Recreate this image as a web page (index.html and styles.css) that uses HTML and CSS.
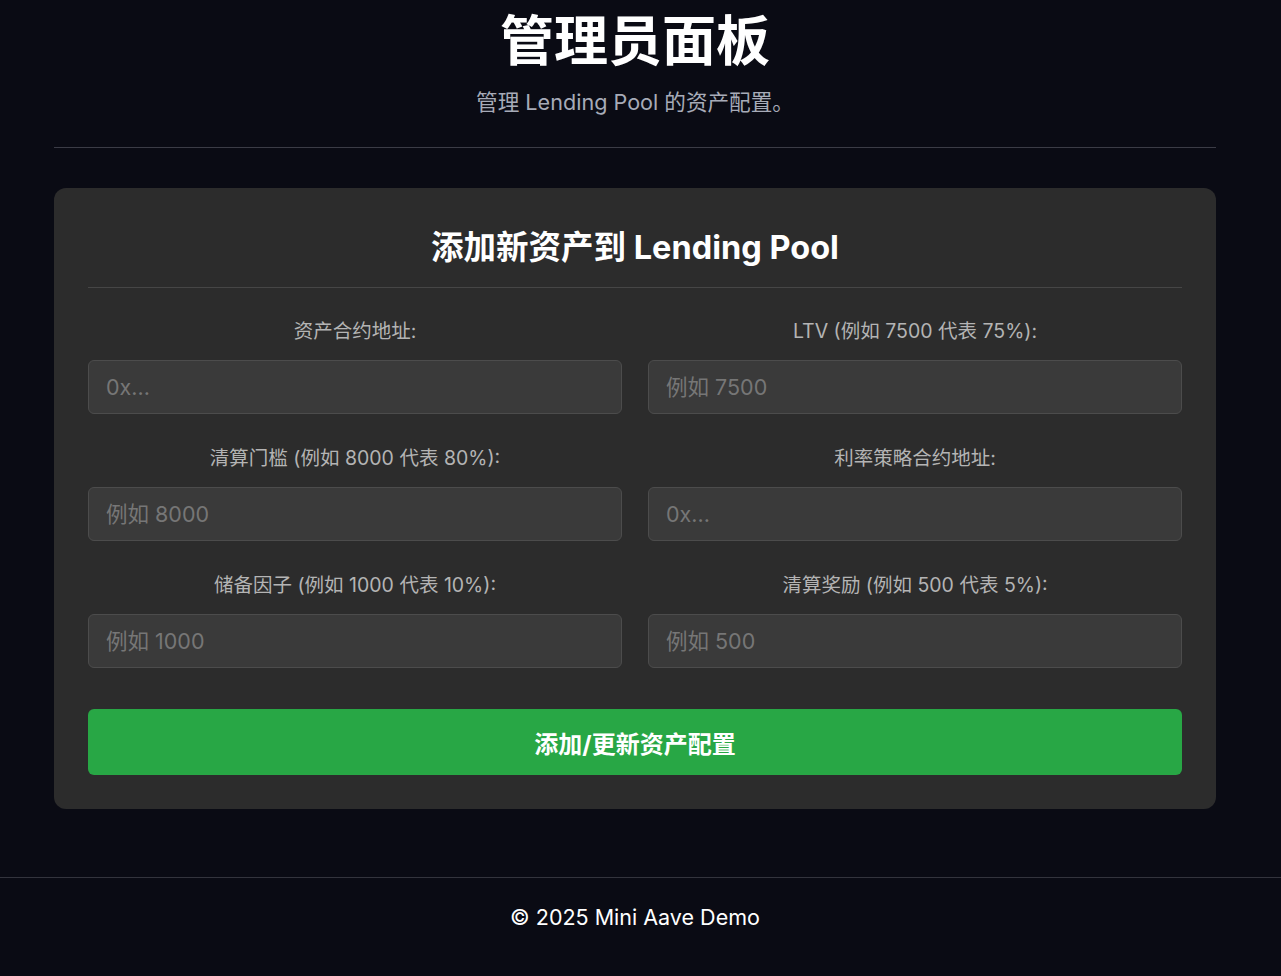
FILE: index.html
```html
<!DOCTYPE html>
<html lang="zh-CN">
<head>
<meta charset="utf-8">
<title>管理员面板</title>
<link rel="stylesheet" href="styles.css">
</head>
<body>
<main class="page">
  <header class="page-header">
    <h1 class="page-title">管理员面板</h1>
    <p class="page-subtitle">管理 Lending Pool 的资产配置。</p>
  </header>
  <section class="card">
    <h2 class="card-title">添加新资产到 Lending Pool</h2>
    <form class="form-grid">
      <div class="field">
        <label class="field-label">资产合约地址:</label>
        <input class="field-input" type="text" placeholder="0x...">
      </div>
      <div class="field">
        <label class="field-label">LTV (例如 7500 代表 75%):</label>
        <input class="field-input" type="text" placeholder="例如 7500">
      </div>
      <div class="field">
        <label class="field-label">清算门槛 (例如 8000 代表 80%):</label>
        <input class="field-input" type="text" placeholder="例如 8000">
      </div>
      <div class="field">
        <label class="field-label">利率策略合约地址:</label>
        <input class="field-input" type="text" placeholder="0x...">
      </div>
      <div class="field">
        <label class="field-label">储备因子 (例如 1000 代表 10%):</label>
        <input class="field-input" type="text" placeholder="例如 1000">
      </div>
      <div class="field">
        <label class="field-label">清算奖励 (例如 500 代表 5%):</label>
        <input class="field-input" type="text" placeholder="例如 500">
      </div>
      <button class="submit-btn" type="button">添加/更新资产配置</button>
    </form>
  </section>
</main>
<footer class="page-footer">© 2025 Mini Aave Demo</footer>
</body>
</html>
```
FILE: styles.css
```css
* { box-sizing: border-box; }
html, body { margin: 0; padding: 0; }
body {
  background: #0a0b14;
  color: #ffffff;
  font-family: Inter, "Noto Sans CJK SC", sans-serif;
  min-height: 976px;
}
.page {
  margin: 0 65px 0 54px;
}
.page-header {
  text-align: center;
  padding-top: 9px;
  padding-bottom: 30px;
  border-bottom: 1px solid #3b3c46;
}
.page-title {
  margin: 0;
  font-size: 54px;
  line-height: 66px;
  font-weight: 700;
}
.page-subtitle {
  margin: 12px 0 0;
  font-size: 21.6px;
  line-height: 30px;
  color: #a7abb8;
}
.card {
  margin-top: 40px;
  background: #2c2c2c;
  border-radius: 12px;
  padding: 34px;
}
.card-title {
  margin: 0 0 29px;
  padding-top: 4px;
  padding-bottom: 17px;
  border-bottom: 1px solid #464646;
  text-align: center;
  font-size: 32.5px;
  line-height: 44px;
  font-weight: 700;
}
.form-grid {
  display: grid;
  grid-template-columns: 1fr 1fr;
  column-gap: 26px;
  row-gap: 30px;
}
.field {
  display: flex;
  flex-direction: column;
  align-items: stretch;
}
.field-label {
  text-align: center;
  font-size: 19.5px;
  line-height: 28px;
  color: #b4b4b4;
  margin-bottom: 15px;
}
.field-input {
  height: 54px;
  background: #3a3a3a;
  border: 1px solid #4c4c4c;
  border-radius: 6px;
  padding: 0 17px;
  font-family: Inter, "Noto Sans CJK SC", sans-serif;
  font-size: 21.5px;
  color: #ffffff;
  outline: none;
}
.field-input::placeholder { color: #767676; }
.submit-btn {
  grid-column: 1 / -1;
  margin-top: 11px;
  height: 66px;
  border: none;
  border-radius: 6px;
  background: #28a745;
  color: #ffffff;
  font-family: Inter, "Noto Sans CJK SC", sans-serif;
  font-size: 24px;
  font-weight: 700;
}
.page-footer {
  margin-top: 68px;
  border-top: 1px solid #33343d;
  text-align: center;
  padding: 26px 65px 0 54px;
  font-size: 21.5px;
  line-height: 26px;
  color: #ffffff;
}
```
